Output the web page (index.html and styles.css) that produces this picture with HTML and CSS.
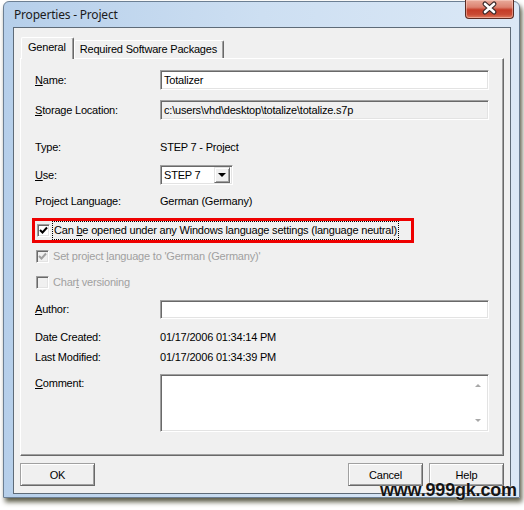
FILE: index.html
```html
<!DOCTYPE html>
<html lang="en">
<head>
    <meta charset="UTF-8">
    <title>Properties - Project</title>
    <link rel="stylesheet" href="styles.css">
</head>
<body>

    <div class="window">
        <div class="titlebar">
            <span class="title">Properties - Project</span>
            <div class="close-btn">
                <svg width="47" height="17" viewBox="0 0 47 17">
                    <path d="M19 4 L28 12 M28 4 L19 12" stroke="#3b2a2a" stroke-width="5" stroke-linecap="round"/>
                    <path d="M19 4 L28 12 M28 4 L19 12" stroke="#ffffff" stroke-width="2.6" stroke-linecap="round"/>
                </svg>
            </div>
        </div>

        <div class="client">
            <div class="tabs">
                <div class="tab active">General</div>
                <div class="tab">Required Software Packages</div>
            </div>

            <div class="panel">
                <div class="row">
                    <span class="label"><u>N</u>ame:</span>
                    <div class="field">Totalizer</div>
                </div>
                <div class="row mt-10">
                    <span class="label"><u>S</u>torage Location:</span>
                    <div class="field readonly">c:\users\vhd\desktop\totalize\totalize.s7p</div>
                </div>
                <div class="row text-row mt-19">
                    <span class="label">Type:</span>
                    <span>STEP 7 - Project</span>
                </div>
                <div class="row mt-10">
                    <span class="label"><u>U</u>se:</span>
                    <div class="combo">
                        <span class="combo-text">STEP 7</span>
                        <span class="combo-btn"><span class="arrow-down"></span></span>
                    </div>
                </div>
                <div class="row text-row mt-8">
                    <span class="label">Project Language:</span>
                    <span>German (Germany)</span>
                </div>
                <div class="row tall mt-9">
                    <div class="highlight">
                        <span class="check">
                            <svg width="9" height="9" viewBox="0 0 9 9"><path d="M1 4 L3.5 6.5 L8 1.5" stroke="#000" stroke-width="2" fill="none"/></svg>
                        </span>
                        <span class="focus">Can <u>b</u>e opened under any Windows language settings (language neutral)</span>
                    </div>
                </div>
                <div class="row text-row mt-5 disabled">
                    <span class="check">
                        <svg width="9" height="9" viewBox="0 0 9 9"><path d="M1 4 L3.5 6.5 L8 1.5" stroke="#a0a0a0" stroke-width="2" fill="none"/></svg>
                    </span>
                    <span class="check-label">Set project <u>l</u>anguage to 'German (Germany)'</span>
                </div>
                <div class="row text-row mt-10 disabled">
                    <span class="check"></span>
                    <span class="check-label">Char<u>t</u> versioning</span>
                </div>
                <div class="row mt-9">
                    <span class="label"><u>A</u>uthor:</span>
                    <div class="field short"></div>
                </div>
                <div class="row text-row mt-10">
                    <span class="label">Date Created:</span>
                    <span>01/17/2006 01:34:14 PM</span>
                </div>
                <div class="row text-row mt-4">
                    <span class="label">Last Modified:</span>
                    <span>01/17/2006 01:34:39 PM</span>
                </div>
                <div class="row top mt-9">
                    <span class="label"><u>C</u>omment:</span>
                    <div class="field memo">
                        <div class="scroll">
                            <span class="arrow-up small"></span>
                            <span class="arrow-down small"></span>
                        </div>
                    </div>
                </div>
            </div>

            <div class="buttons">
                <button class="btn ok">OK</button>
                <button class="btn">Cancel</button>
                <button class="btn">Help</button>
            </div>
        </div>
    </div>

    <div class="watermark">www.999gk.com</div>

</body>
</html>
```

FILE: styles.css
```css
body {
    margin: 0;
    background: #ffffff;
    font-family: "Liberation Sans", Arial, sans-serif;
    font-size: 11px;
    letter-spacing: -0.2px;
    color: #000;
    position: relative;
    height: 510px;
    overflow: hidden;
}

/* Aero window frame */
.window {
    box-sizing: border-box;
    width: 517px;
    height: 497px;
    margin: 1px 0 0 3px;
    padding: 0 8px 3px 9px;
    border: 1px solid #6c7f93;
    border-radius: 6px 6px 0 0;
    background: linear-gradient(to right, #b6cfea, #cddff2 50%, #dbe8f6);
    box-shadow: 2px 4px 5px rgba(50, 50, 25, 0.8);
    display: flex;
    flex-direction: column;
}

.titlebar {
    height: 25px;
    display: flex;
    align-items: flex-start;
}

.title {
    font-family: "Noto Sans", "Open Sans", sans-serif;
    font-size: 12px;
    letter-spacing: -0.2px;
    color: #1b1b1b;
    margin: 4px 0 0 1px;
}

.close-btn {
    margin: -2px -3px 0 auto;
    width: 47px;
    height: 18px;
    border: 1px solid #5b2b22;
    border-top: none;
    border-radius: 0 0 4px 4px;
    background: linear-gradient(#e9ab9b 0%, #dc8270 40%, #c53c27 55%, #c94a33 80%, #e07c5e 100%);
    box-shadow: inset 0 0 0 1px rgba(255, 220, 210, 0.45);
}

.close-btn svg {
    display: block;
}

.client {
    flex: 1;
    background: #f0f0f0;
    border: 1px solid #5e6b78;
    padding: 9px 6px 7px;
    display: flex;
    flex-direction: column;
}

/* Tabs */
.tabs {
    height: 21px;
    display: flex;
    align-items: flex-end;
    padding-left: 1px;
}

.tab {
    height: 18px;
    box-sizing: border-box;
    padding: 0 6px 0 5px;
    line-height: 17px;
    border-top: 1px solid #fff;
    border-left: 1px solid #fff;
    border-right: 1px solid #696969;
    border-radius: 2px 2px 0 0;
    box-shadow: inset -1px 0 #a0a0a0;
}

.tab.active {
    position: relative;
    height: 22px;
    margin-bottom: -1px;
    padding: 0 7px 0 6px;
    line-height: 19px;
    background: #f0f0f0;
}

.panel {
    flex: 1;
    border: 1px solid;
    border-color: #fff #696969 #696969 #fff;
    box-shadow: inset -1px -1px #a0a0a0;
    padding: 11px 14px 0 14px;
}

/* Form rows */
.row {
    display: flex;
    align-items: center;
    height: 20px;
}

.row.text-row {
    height: 16px;
}

.row.tall {
    height: 25px;
}

.row.top {
    align-items: flex-start;
    height: auto;
}

.row.top .label {
    margin-top: 1px;
    line-height: 16px;
}

.mt-4 { margin-top: 4px; }
.mt-5 { margin-top: 5px; }
.mt-8 { margin-top: 8px; }
.mt-9 { margin-top: 9px; }
.mt-10 { margin-top: 10px; }
.mt-19 { margin-top: 19px; }

.label {
    width: 125px;
    flex-shrink: 0;
}

.field {
    flex: 1;
    box-sizing: border-box;
    height: 20px;
    padding: 0 3px;
    line-height: 18px;
    border: 1px solid;
    border-color: #a0a0a0 #fff #fff #a0a0a0;
    box-shadow: inset 1px 1px #696969, inset -1px -1px #e3e3e3;
    background: #fff;
}

.field.readonly {
    background: #f0f0f0;
}

.field.short {
    height: 19px;
}

.field.memo {
    height: 58px;
    display: flex;
    justify-content: flex-end;
    padding: 0 2px 0 0;
}

.scroll {
    width: 16px;
    display: flex;
    flex-direction: column;
    justify-content: space-between;
    align-items: center;
    padding: 9px 0 9px;
}

/* Combo box */
.combo {
    width: 73px;
    height: 20px;
    box-sizing: border-box;
    display: flex;
    align-items: center;
    border: 1px solid;
    border-color: #a0a0a0 #fff #fff #a0a0a0;
    box-shadow: inset 1px 1px #696969, inset -1px -1px #e3e3e3;
    background: #fff;
    padding: 2px;
}

.combo-text {
    flex: 1;
    padding-left: 1px;
}

.combo-btn {
    width: 16px;
    height: 16px;
    box-sizing: border-box;
    background: #f0f0f0;
    border: 1px solid;
    border-color: #e3e3e3 #696969 #696969 #e3e3e3;
    box-shadow: inset 1px 1px #fff, inset -1px -1px #a0a0a0;
    display: flex;
    align-items: center;
    justify-content: center;
}

.arrow-down {
    width: 0;
    height: 0;
    border-left: 4px solid transparent;
    border-right: 4px solid transparent;
    border-top: 4px solid #000;
}

.arrow-up {
    width: 0;
    height: 0;
    border-left: 4px solid transparent;
    border-right: 4px solid transparent;
    border-bottom: 4px solid #000;
}

.arrow-up.small {
    border-width: 0 3px 3px;
    border-bottom-color: #a8a8a8;
}

.arrow-down.small {
    border-width: 3px 3px 0;
    border-top-color: #a8a8a8;
}

/* Checkboxes */
.check {
    width: 13px;
    height: 13px;
    box-sizing: border-box;
    flex-shrink: 0;
    margin-left: 1px;
    border: 1px solid;
    border-color: #a0a0a0 #fff #fff #a0a0a0;
    box-shadow: inset 1px 1px #696969, inset -1px -1px #e3e3e3;
    background: #fff;
    display: flex;
    align-items: center;
    justify-content: center;
}

.check svg {
    display: block;
}

.disabled {
    color: #a0a0a0;
}

.disabled .check {
    background: #f0f0f0;
}

.check-label {
    margin-left: 4px;
}

.highlight {
    display: flex;
    align-items: center;
    height: 25px;
    box-sizing: border-box;
    margin-left: -3px;
    padding: 0 13px 0 1px;
    border: 3px solid #ee0000;
}

.focus {
    margin-left: 3px;
    padding: 0 1px;
    line-height: 17px;
    outline: 1px dotted #000;
}

/* Dialog buttons */
.buttons {
    display: flex;
    gap: 6px;
    margin-top: 7px;
}

.btn {
    width: 75px;
    height: 23px;
    box-sizing: border-box;
    font-family: inherit;
    font-size: 11px;
    letter-spacing: -0.2px;
    color: #000;
    background: #f0f0f0;
    border: 1px solid;
    border-color: #a0a0a0 #696969 #696969 #a0a0a0;
    box-shadow: inset 1px 1px #fff, inset -1px -1px #a0a0a0;
    padding: 0;
}

.btn.ok {
    margin-right: auto;
}

.watermark {
    position: absolute;
    left: 380px;
    top: 480px;
    font-family: "Liberation Sans", Arial, sans-serif;
    font-weight: bold;
    font-size: 18px;
    letter-spacing: -0.2px;
    color: #151515;
    text-shadow: 0 0 2px rgba(255, 255, 255, 0.8);
}
```
